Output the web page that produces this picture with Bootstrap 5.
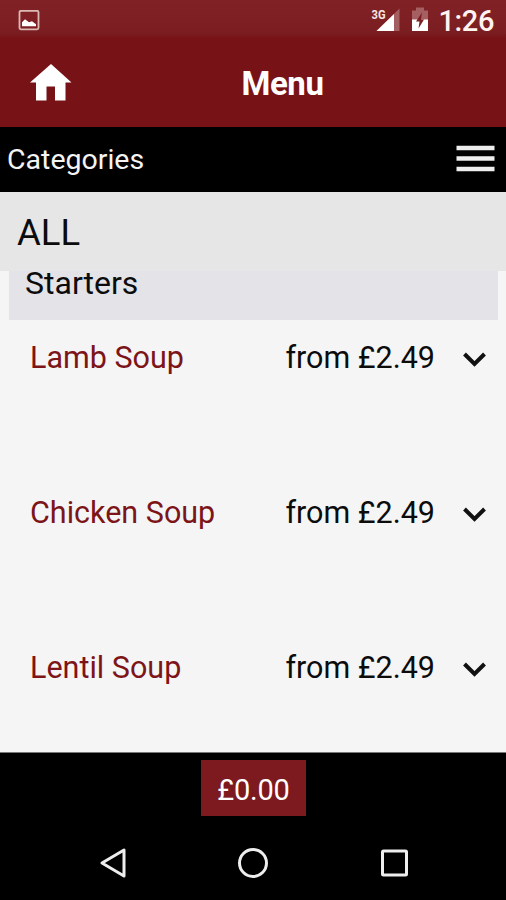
<!DOCTYPE html>
<html lang="en">
<head>
<meta charset="utf-8">
<meta name="viewport" content="width=device-width, initial-scale=1">
<title>Menu</title>
<link href="https://cdn.jsdelivr.net/npm/bootstrap@5.3.0/dist/css/bootstrap.min.css" rel="stylesheet">
<style>
body{font-family:Roboto,"Noto Sans",sans-serif;background:#f5f5f5;color:#0c0c0c;line-height:1;height:900px;overflow:hidden}
svg{display:block;flex:none}
.status-strip{height:38px;background:linear-gradient(#802125 0,#7b1e22 85%,#781418 100%);padding:3px 12px 0 18px}
.clock{font-size:29px;font-weight:500;color:#fff3f1;letter-spacing:-.4px;padding-top:1px}
.app-head{height:89px;background:#771317;display:grid;grid-template-columns:60px 1fr 11px;padding:0 11px 0 22px}
.app-title{font-size:33px;font-weight:700;margin:0;text-align:center;letter-spacing:-.4px;padding:3px 1px 0 0}
.cat-bar{height:65px;background:#000;color:#f4f4f4;font-size:28.5px;padding:0 11px 0 7px}
.cat-bar span{padding-top:2px}
.cat-bar svg{margin-top:-1px}
.all-row{height:79px;background:#e6e6e6;font-size:36.5px;padding:3px 17px 0}
.group-head{height:49px;background:#e3e3e8;margin:0 8px 0 9px;padding:0 16px;font-size:32px;line-height:32px}
.group-head span{display:block;margin-top:-4px}
.dish{height:155px;padding:22px 19px 0 30px;font-size:30.5px;line-height:32px}
.dish-name{color:#7c1418}
.dish-price{margin-right:27px}
.content-area{height:481px}
.basket{height:74px;background:#000;padding-top:7px;border-top:1px solid #777}
.basket .btn{width:105px;height:56px;background:#7c1a1f;color:#fff;font-size:29px;line-height:1;border:0;border-radius:0;padding:4px 0 0 1px;font-family:inherit;letter-spacing:-.2px}
.sys-nav{height:74px;background:#000;padding:0 97px 0 99px}
</style>
</head>
<body>
<div class="status-strip d-flex align-items-center">
  <svg width="22" height="22" viewBox="0 .7 22 22" class="me-auto"><rect x="1.5" y="1.5" width="19" height="18.5" rx="1.5" fill="none" stroke="#ddb9b4" stroke-width="1.8"/><path d="M4 17v-4l3-3 4 3 3-1 4 3v2z" fill="#fff"/></svg>
  <svg width="60" height="30" viewBox="371 5.500 60 30" class="me-2">
    <text x="371.5" y="18.5" font-size="12" font-weight="700" fill="#f4e5e2" textLength="14" lengthAdjust="spacingAndGlyphs">3G</text>
    <path d="M399.500 8v22.500h-23z" fill="#a65f60"/><path d="M394 13.500v17h-17.500z" fill="#fff"/>
    <path d="M412 10h4V7h8v3h4v20.500h-16z" fill="#a65f60"/><path d="M412 19h16v11.500h-16z" fill="#fff"/><path d="M422 12l-6 9h3.500l-1 7 5.500-9h-3z" fill="#7b1e22"/>
  </svg>
  <span class="clock">1:26</span>
</div>
<header class="app-head align-items-center text-white">
  <svg width="60" height="50" viewBox="22 57.500 60 50"><path d="M51 63.500L71.500 82h-6v18H55V86h-8.500v14H36V82h-6z" fill="#fff"/></svg>
  <h1 class="app-title">Menu</h1>
</header>
<div class="cat-bar d-flex align-items-center justify-content-between">
  <span>Categories</span>
  <svg width="39" height="28" viewBox="0 0 39 28"><path d="M.5 3h38M.5 13.500h38M.5 24h38" stroke="#eee" stroke-width="4.500"/></svg>
</div>
<main>
  <div class="all-row d-flex align-items-center">ALL</div>
  <div class="content-area">
    <div class="group-head d-flex align-items-start"><span>Starters</span></div>
    <div class="dish d-flex align-items-start"><span class="dish-name me-auto">Lamb Soup</span><span class="dish-price">from £2.49</span><svg width="25" height="32" viewBox="0 0 25 32"><path d="M2.500 12l10 10 10-10" fill="none" stroke="#111" stroke-width="4"/></svg></div>
    <div class="dish d-flex align-items-start"><span class="dish-name me-auto">Chicken Soup</span><span class="dish-price">from £2.49</span><svg width="25" height="32" viewBox="0 0 25 32"><path d="M2.500 12l10 10 10-10" fill="none" stroke="#111" stroke-width="4"/></svg></div>
    <div class="dish d-flex align-items-start"><span class="dish-name me-auto">Lentil Soup</span><span class="dish-price">from £2.49</span><svg width="25" height="32" viewBox="0 0 25 32"><path d="M2.500 12l10 10 10-10" fill="none" stroke="#111" stroke-width="4"/></svg></div>
  </div>
</main>
<footer>
  <div class="basket text-center"><button class="btn" type="button">£0.00</button></div>
  <nav class="sys-nav d-flex align-items-center justify-content-between">
    <svg width="28" height="32" viewBox="0 0 28 32"><path d="M25 3v26L3 16z" fill="none" stroke="#eee" stroke-width="3" stroke-linejoin="round"/></svg>
    <svg width="32" height="32" viewBox="1 0 32 32"><circle cx="16" cy="16" r="13.500" fill="none" stroke="#eee" stroke-width="3"/></svg>
    <svg width="29" height="32" viewBox="0 0 29 32"><rect x="2.500" y="4" width="24" height="24" rx="1" fill="none" stroke="#eee" stroke-width="3"/></svg>
  </nav>
</footer>
<script src="https://cdn.jsdelivr.net/npm/bootstrap@5.3.0/dist/js/bootstrap.bundle.min.js"></script>
</body>
</html>
